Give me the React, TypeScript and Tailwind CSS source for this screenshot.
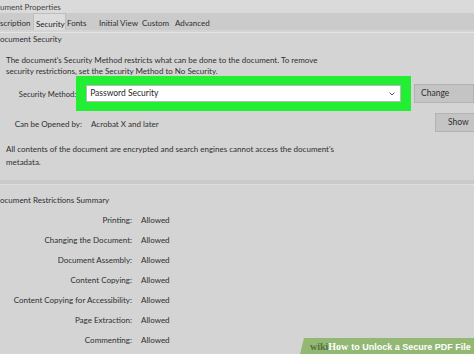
import React from 'react';

const restrictions = [
  'Printing',
  'Changing the Document',
  'Document Assembly',
  'Content Copying',
  'Content Copying for Accessibility',
  'Page Extraction',
  'Commenting',
];

const tabs = [
  { label: 'scription', w: 'w-[33px]' },
  { label: 'Security', w: 'w-[33px]' },
  { label: 'Fonts', w: 'w-[33px]' },
  { label: 'Initial View', w: 'w-[43px]' },
  { label: 'Custom', w: 'w-[33px]' },
  { label: 'Advanced', w: 'w-[40px]' },
];

const App: React.FC = () => {
  return (
    <div
      className="relative w-[474px] h-[354px] overflow-hidden bg-[#d4d4d4] text-[#2f2f2f] text-[8px] leading-none"
      style={{ fontFamily: 'Lato, "Open Sans", sans-serif' }}
    >
      {/* Title */}
      <div className="h-[13px] bg-[#dadada] flex items-center text-[8px] text-[#444]">ument Properties</div>

      {/* Tab strip */}
      <div className="h-[17px] bg-[#cbcbcb] flex items-stretch">
        {tabs.map((t) => (
          <div
            key={t.label}
            className={
              t.label === 'Security'
                ? `${t.w} pl-[2px] pt-[3px] flex items-center bg-[#dcdcdc] border-x border-t border-[#bdbdbd] text-[#222]`
                : t.label === 'Fonts'
                ? `${t.w} pl-[1px] pt-[3px] flex items-center`
                : `${t.w} pt-[3px] flex items-center`
            }
          >
            {t.label}
          </div>
        ))}
      </div>

      {/* Document Security group */}
      <div className="mt-[2px] border-t border-[#e4e4e4] h-[13px] flex items-center">ocument Security</div>

      <div className="pl-[6px] mt-[10px] leading-[11px]">
        <div>The document's Security Method restricts what can be done to the document. To remove</div>
        <div>security restrictions, set the Security Method to No Security.</div>
      </div>

      <div className="flex items-center mt-[-1px]">
        <div className="w-[81px] text-right pt-[3px] whitespace-nowrap text-[7.6px]">Security Method:</div>
        <div className="w-[355px] h-[35px] bg-[#22ee33] flex items-center pl-[10px] pr-[10px]">
          <div className="flex-1 h-[17px] bg-white border border-[#b9b9b9] flex items-center justify-between pl-[3px] pr-[3px] text-[#1f1f1f] text-[8.5px]">
            <span>Password Security</span>
            <svg width="8" height="6" viewBox="0 0 8 6" className="mr-[1px]">
              <path d="M1.5 1.5 L4 4 L6.5 1.5" fill="none" stroke="#555" strokeWidth="1" />
            </svg>
          </div>
        </div>
        <div className="ml-[3px] h-[19px] w-[60px] shrink-0 bg-[#c4c4c4] border border-[#b3b3b3] flex items-center pl-[6px] text-[8.5px]">
          Change
        </div>
      </div>

      <div className="flex items-center mt-[2px] h-[19px]">
        <div className="w-[82px] shrink-0 text-right whitespace-nowrap pt-[3px]">Can be Opened by:</div>
        <div className="w-[353px] shrink-0 pl-[9px] pt-[3px]">Acrobat X and later</div>
        <div className="h-[19px] w-[50px] shrink-0 bg-[#c4c4c4] border border-[#b3b3b3] flex items-center pl-[12px] text-[8.5px]">
          Show
        </div>
      </div>

      <div className="pl-[6px] mt-[11px] leading-[13px]">
        <div>All contents of the document are encrypted and search engines cannot access the document's</div>
        <div>metadata.</div>
      </div>

      {/* Restrictions group */}
      <div className="mt-[11px] h-[5px] bg-[#cacaca] border-b border-[#dedede]" />
      <div className="mt-[9px] h-[12px] flex items-center">ocument Restrictions Summary</div>

      <div className="mt-[4px] flex flex-col">
        {restrictions.map((r) => (
          <div key={r} className="h-[20px] flex items-center">
            <div className="w-[132px] shrink-0 text-right whitespace-nowrap">{r}:</div>
            <div className="ml-[9px]">Allowed</div>
          </div>
        ))}
      </div>

      {/* wikiHow badge */}
      <div className="absolute right-0 bottom-0 h-[16px] w-[174px] flex items-center">
        <svg className="absolute inset-0" width="174" height="16" viewBox="0 0 174 16" preserveAspectRatio="none">
          <polygon points="4,0 174,0 174,16 0,16" fill="#93b874" />
        </svg>
        <div className="relative pl-[10px] pt-[2px] flex items-baseline text-[9px] font-bold text-white whitespace-nowrap" style={{ fontFamily: '"Liberation Sans", sans-serif' }}>
          <span className="text-[#55713d] text-[10px]" style={{ fontFamily: '"Liberation Serif", serif' }}>wiki</span>
          <span className="text-[10px]" style={{ fontFamily: '"Liberation Serif", serif' }}>How</span>
          <span className="ml-[3px]">to Unlock a Secure PDF File</span>
        </div>
      </div>
    </div>
  );
};

export default App;
